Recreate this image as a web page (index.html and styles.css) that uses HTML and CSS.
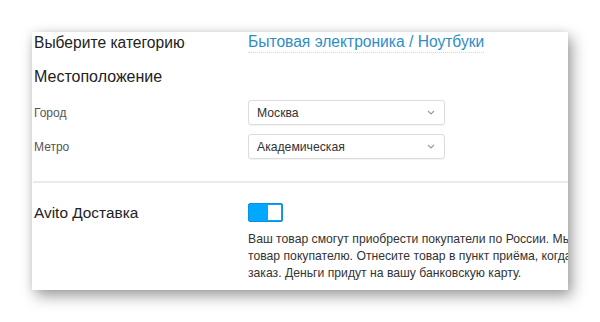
FILE: index.html
```html
<!DOCTYPE html>
<html lang="ru">
<head>
  <meta charset="UTF-8">
  <meta name="viewport" content="width=device-width, initial-scale=1.0">
  <title>Подача объявления</title>
  <link rel="stylesheet" href="styles.css">
</head>
<body>

  <div class="card">
    <div class="row category-row">
      <div class="label">Выберите категорию</div>
      <a class="category-link" href="#">Бытовая электроника / Ноутбуки</a>
    </div>

    <div class="section-title">Местоположение</div>

    <div class="row field-row">
      <div class="field-label">Город</div>
      <div class="select">
        <span>Москва</span>
        <svg class="chevron" width="8" height="5" viewBox="0 0 8 5"><path d="M1 1 L4 4 L7 1" fill="none" stroke="#999" stroke-width="1.1"/></svg>
      </div>
    </div>

    <div class="row field-row">
      <div class="field-label">Метро</div>
      <div class="select">
        <span>Академическая</span>
        <svg class="chevron" width="8" height="5" viewBox="0 0 8 5"><path d="M1 1 L4 4 L7 1" fill="none" stroke="#999" stroke-width="1.1"/></svg>
      </div>
    </div>

    <div class="divider"></div>

    <div class="row delivery-row">
      <div class="label delivery-label">Avito Доставка</div>
      <div class="delivery-body">
        <div class="toggle"><div class="knob"></div></div>
        <p class="delivery-text">
          Ваш товар смогут приобрести покупатели по России. Мы доставим<br>
          товар покупателю. Отнесите товар в пункт приёма, когда получите<br>
          заказ. Деньги придут на вашу банковскую карту.
        </p>
      </div>
    </div>
  </div>

</body>
</html>
```

FILE: styles.css
```css
body {
  margin: 0;
  padding: 32px;
  background-color: #fff;
  font-family: "Liberation Sans", Arial, sans-serif;
  color: #222;
}

.card {
  width: 534px;
  height: 258px;
  padding-left: 2px;
  background: #fff;
  overflow: hidden;
  box-shadow: 4px 6px 14px rgba(0,0,0,0.38), 0 0 8px rgba(0,0,0,0.08);
}

.row {
  display: flex;
}

.label {
  width: 214px;
  flex-shrink: 0;
}

/* Категория */
.category-row {
  padding-top: 1px;
  font-size: 15.6px;
  line-height: 20px;
}

.category-link {
  color: #2f8dc6;
  text-decoration: none;
  border-bottom: 1px dotted #c9dbe7;
  line-height: 18px;
}

.section-title {
  margin-top: 14px;
  font-size: 16px;
  line-height: 20px;
}

/* Город / метро */
.field-row {
  align-items: center;
  margin-top: 9px;
}

.section-title + .field-row {
  margin-top: 13px;
}

.field-label {
  width: 214px;
  flex-shrink: 0;
  font-size: 12px;
  color: #555;
}

.select {
  box-sizing: border-box;
  width: 197px;
  height: 25px;
  padding: 0 9px 0 8px;
  display: flex;
  align-items: center;
  justify-content: space-between;
  border: 1px solid #dcdcdc;
  border-radius: 3px;
  box-shadow: 0 1px 1px rgba(0,0,0,0.05);
  font-size: 12.2px;
  color: #333;
}

.divider {
  margin-top: 22px;
  margin-left: -1px;
  height: 2px;
  background: #ebebeb;
}

/* Доставка */
.delivery-row {
  padding-top: 20px;
}

.delivery-label {
  font-size: 15.4px;
  line-height: 20px;
}

.delivery-body {
  flex-shrink: 0;
}

.toggle {
  box-sizing: border-box;
  width: 35px;
  height: 19px;
  border: 1px solid #0a90dc;
  border-radius: 2px;
  background: #00a8ff;
  position: relative;
}

.knob {
  position: absolute;
  top: 1px;
  right: 1px;
  width: 13px;
  height: 15px;
  background: #fff;
}

.delivery-text {
  margin: 9px 0 0;
  font-size: 12.2px;
  line-height: 17px;
  color: #333;
  white-space: nowrap;
}
```
